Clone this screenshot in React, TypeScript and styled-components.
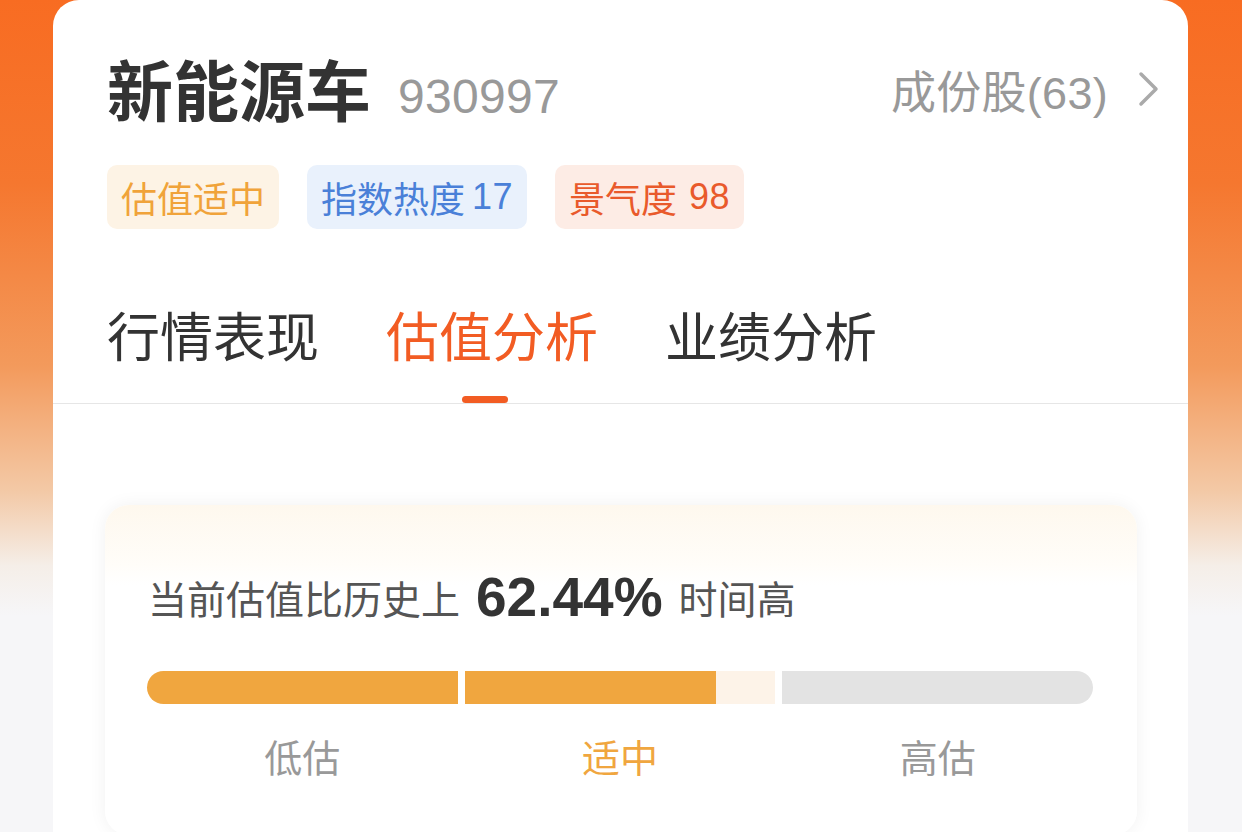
import React from 'react';
import styled, { createGlobalStyle } from 'styled-components';

const GlobalStyle = createGlobalStyle`
    html, body {
        margin: 0;
        padding: 0;
    }
    body {
        font-family: "Liberation Sans", "Noto Sans CJK SC", sans-serif;
        background: #f6f6f8;
    }
`;

const Page = styled.div`
    height: 832px;
    overflow: hidden;
    padding: 0 54px 0 53px;
    background: linear-gradient(
        180deg,
        #f86c22 0%,
        #f5772f 22%,
        #f39a5c 44%,
        #f3c9a6 59%,
        #f5eee8 68%,
        #f6f6f8 74%,
        #f6f6f8 100%
    );
`;

const Card = styled.div`
    height: 900px;
    background: #fff;
    border-radius: 26px 26px 0 0;
`;

const Header = styled.div`
    padding: 53px 28px 0 54px;
`;

const TitleRow = styled.div`
    display: flex;
    align-items: center;
    height: 80px;
`;

const Title = styled.h1`
    margin: 0;
    font-size: 66px;
    font-weight: 700;
    color: #333;
    line-height: 1;
`;

const Code = styled.span`
    margin-left: 27px;
    margin-top: 6px;
    font-size: 48px;
    color: #999;
    letter-spacing: 0.3px;
`;

const Constituents = styled.a`
    margin-left: auto;
    display: flex;
    align-items: center;
    gap: 30px;
    font-size: 45px;
    color: #999;
    cursor: pointer;
    margin-top: -8px;
    letter-spacing: 0.3px;
`;

const TagRow = styled.div`
    display: flex;
    gap: 28px;
    margin-top: 32px;
`;

const Tag = styled.span<{ $bg: string; $fg: string }>`
    display: inline-flex;
    align-items: center;
    height: 64px;
    padding: 0 14px;
    border-radius: 10px;
    font-size: 36px;
    background: ${({ $bg }) => $bg};
    color: ${({ $fg }) => $fg};
`;

const TagValue = styled.span<{ $gap: number }>`
    margin-left: ${({ $gap }) => $gap}px;
    letter-spacing: 0.5px;
`;

const Tabs = styled.div`
    display: flex;
    gap: 67px;
    padding: 0 54px;
    margin-top: 67px;
    border-bottom: 1px solid #e6e6e6;
`;

const Tab = styled.div<{ $active?: boolean }>`
    position: relative;
    font-size: 53px;
    line-height: 1;
    padding: 16px 0 38px;
    color: ${({ $active }) => ($active ? '#f25c23' : '#333')};

    &::after {
        content: '';
        display: ${({ $active }) => ($active ? 'block' : 'none')};
        position: absolute;
        left: 50%;
        bottom: 0;
        width: 46px;
        height: 7px;
        margin-left: -30px;
        border-radius: 4px;
        background: #f25c23;
    }
`;

const ValuationCard = styled.div`
    margin: 101px 51px 0 52px;
    padding: 62px 44px 52px 42px;
    border-radius: 24px;
    background: linear-gradient(180deg, #fef8ee 0px, #fffdf9 60px, #ffffff 80px);
    box-shadow: 0 0 18px rgba(0, 0, 0, 0.06);
`;

const Summary = styled.div`
    display: flex;
    align-items: center;
    gap: 16px;
    height: 60px;
    padding-left: 1px;
    font-size: 39px;
    color: #555;
`;

const Percent = styled.span`
    font-size: 55px;
    font-weight: 700;
    line-height: 1;
    color: #333;
`;

const Bar = styled.div`
    display: flex;
    gap: 7px;
    margin-top: 44px;
    height: 33px;
`;

const Segment = styled.div<{ $pos: 'first' | 'mid' | 'last' }>`
    flex: 1;
    position: relative;
    overflow: hidden;
    background: ${({ $pos }) => ($pos === 'last' ? '#e3e3e3' : $pos === 'mid' ? '#fdf3e8' : '#f0a63f')};
    border-radius: ${({ $pos }) =>
        $pos === 'first' ? '17px 0 0 17px' : $pos === 'last' ? '0 17px 17px 0' : '0'};
`;

const Fill = styled.div`
    height: 100%;
    background: #f0a63f;
`;

const Labels = styled.div`
    display: flex;
    gap: 7px;
    margin-top: 24px;
`;

const Label = styled.span<{ $active?: boolean }>`
    flex: 1;
    text-align: center;
    font-size: 38px;
    color: ${({ $active }) => ($active ? '#f0a63f' : '#999')};
`;

const Chevron = () => (
    <svg width="22" height="36" viewBox="0 0 22 36" fill="none">
        <path d="M3 3l15 15-15 15" stroke="#aaa" strokeWidth="3.5" strokeLinecap="round" strokeLinejoin="round" />
    </svg>
);

const tabs = ['行情表现', '估值分析', '业绩分析'];

const App = () => {
    const midFill = 81;

    return (
        <>
            <GlobalStyle />
            <Page>
                <Card>
                    <Header>
                        <TitleRow>
                            <Title>新能源车</Title>
                            <Code>930997</Code>
                            <Constituents>
                                成份股(63)
                                <Chevron />
                            </Constituents>
                        </TitleRow>
                        <TagRow>
                            <Tag $bg="#fdf3e5" $fg="#f0a33a">估值适中</Tag>
                            <Tag $bg="#e9f1fc" $fg="#4a80d8">
                                指数热度<TagValue $gap={7}>17</TagValue>
                            </Tag>
                            <Tag $bg="#fdece5" $fg="#e95a2b">
                                景气度<TagValue $gap={12}>98</TagValue>
                            </Tag>
                        </TagRow>
                    </Header>
                    <Tabs>
                        {tabs.map((t) => (
                            <Tab key={t} $active={t === '估值分析'}>
                                {t}
                            </Tab>
                        ))}
                    </Tabs>
                    <ValuationCard>
                        <Summary>
                            当前估值比历史上
                            <Percent>62.44%</Percent>
                            时间高
                        </Summary>
                        <Bar>
                            <Segment $pos="first" />
                            <Segment $pos="mid">
                                <Fill style={{ width: `${midFill}%` }} />
                            </Segment>
                            <Segment $pos="last" />
                        </Bar>
                        <Labels>
                            <Label>低估</Label>
                            <Label $active>适中</Label>
                            <Label>高估</Label>
                        </Labels>
                    </ValuationCard>
                </Card>
            </Page>
        </>
    );
};

export default App;
